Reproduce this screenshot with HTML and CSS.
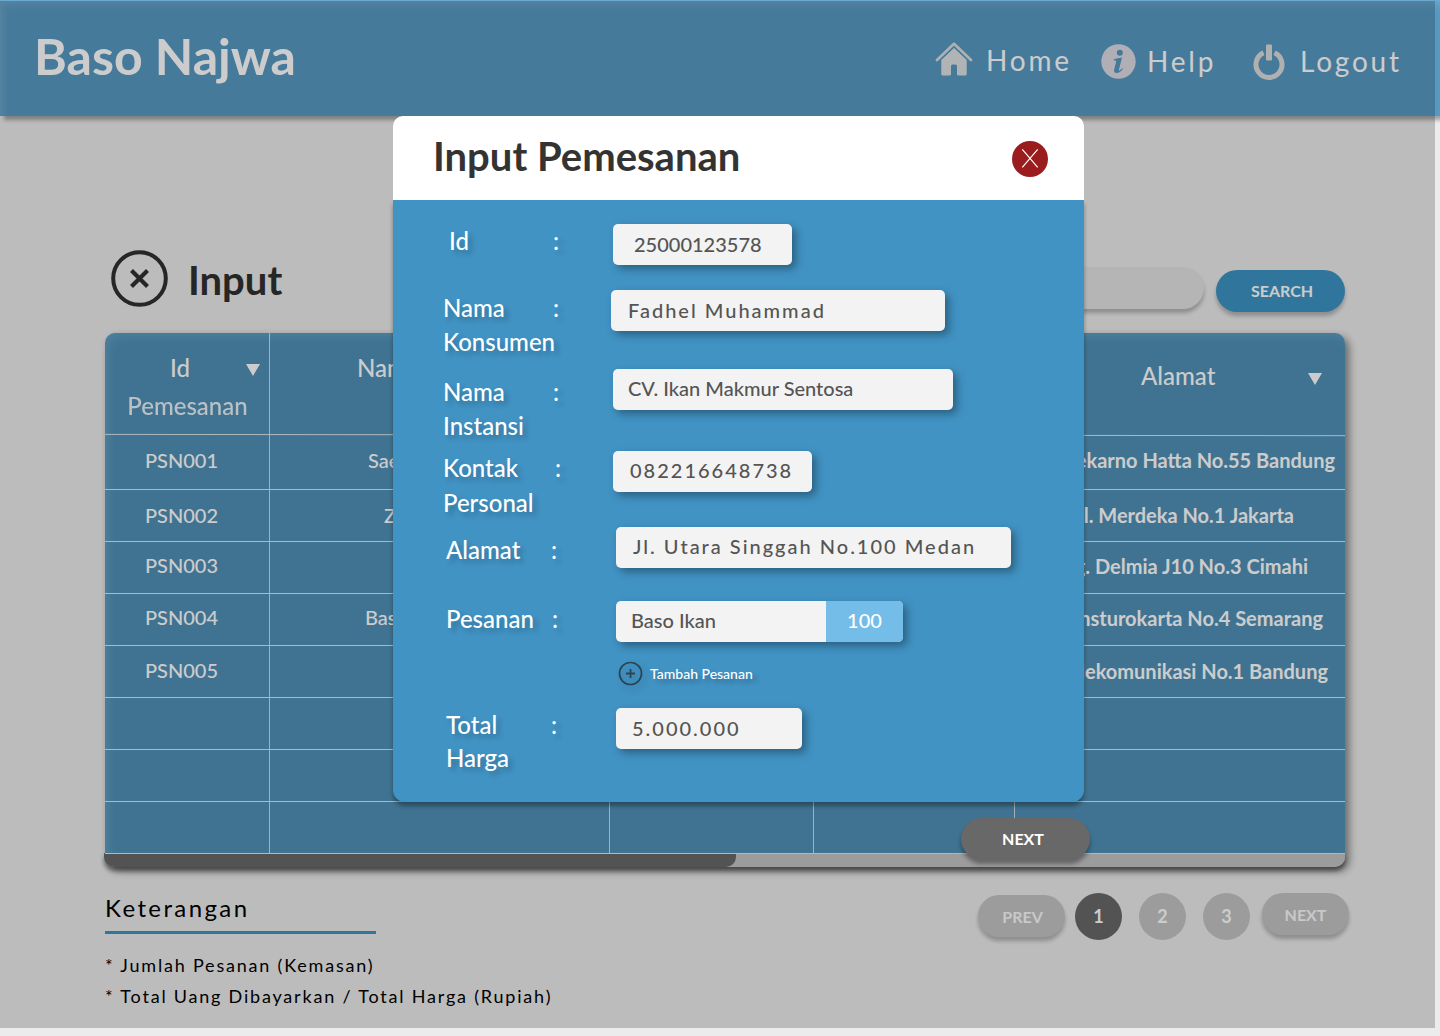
FILE: index.html
```html
<!DOCTYPE html>
<html lang="id">
<head>
<meta charset="utf-8">
<title>Baso Najwa</title>
<link rel="stylesheet" href="styles.css">
</head>
<body>
<div class="page">
  <header class="topbar">
    <h1 class="brand">Baso Najwa</h1>
    <nav class="nav">
      <a class="nav-item home">
        <svg class="icon-home" width="38" height="36" viewBox="0 0 38 36">
          <path d="M6.300 18.800 19 6.800 31.700 18.800V33q0 1.500-1.500 1.500H23.500Q22 34.500 22 33V25q0-1.500-1.500-1.500h-3q-1.500 0-1.500 1.500V33q0 1.500-1.500 1.500H7.800Q6.300 34.500 6.300 33Z" fill="#dde1e3"/>
          <path d="M2 19.500 19 3.500 36 19.500" fill="none" stroke="#5698bf" stroke-width="4.500"/>
          <path d="M2 19 19 2.800 36 19" fill="none" stroke="#d9dcde" stroke-width="2.800" stroke-linejoin="round" stroke-linecap="round"/>
        </svg>
        <span>Home</span>
      </a>
      <a class="nav-item help">
        <svg class="icon-help" width="35" height="35" viewBox="0 0 35 35">
          <circle cx="17.500" cy="17.500" r="17.200" fill="#dcdbe4"/>
          <circle cx="18.800" cy="8.800" r="3" fill="#5698bf"/>
          <path d="M12.800 15.300Q17 14.300 21 13.600L18 25.500Q17.600 27.300 18.700 26.600L21.300 24.200 21.900 25Q18.500 29.500 14.800 29Q12.500 28.500 13.200 25.500L15.200 17.500Q15.400 16.300 12.600 16.300Z" fill="#5698bf"/>
        </svg>
        <span>Help</span>
      </a>
      <a class="nav-item logout">
        <svg class="icon-power" width="32" height="36" viewBox="0 0 32 36">
          <path d="M10.500 8.700A13 13 0 1 0 21.500 8.700" fill="none" stroke="#dddddd" stroke-width="5"/>
          <rect x="11.800" y="-1" width="8.400" height="19" fill="#5698bf"/>
          <rect x="13" y="0.500" width="6" height="16" rx="1" fill="#dddddd"/>
        </svg>
        <span>Logout</span>
      </a>
    </nav>
  </header>

  <main class="content">
    <div class="toolbar">
      <svg class="icon-close" width="57" height="57" viewBox="0 0 57 57">
        <circle cx="28.500" cy="28.500" r="26.300" fill="none" stroke="#303030" stroke-width="4"/>
        <path d="M20.500 20.500l16 16M36.500 20.500l-16 16" stroke="#303030" stroke-width="4.200"/>
      </svg>
      <h2 class="toolbar-title">Input</h2>
      <div class="search-box"></div>
      <button class="pill search-btn">SEARCH</button>
    </div>

    <div class="table-wrap">
      <div class="table">
        <div class="row head">
          <div class="cell id">Id<br><span class="second">Pemesanan</span><i class="sort"></i></div>
          <div class="cell name">Nama</div>
          <div class="cell"></div>
          <div class="cell"></div>
          <div class="cell addr">Alamat<i class="sort"></i></div>
          <svg class="head-line" width="1240" height="4" viewBox="0 0 1240 4"><path d="M0 1.400 1240 2.700" stroke="#dfe6ea"/></svg>
        </div>
        <div class="row r1"><div class="cell id">PSN001</div><div class="cell name">Saeful</div><div class="cell"></div><div class="cell"></div><div class="cell addr">Jl. Soekarno Hatta No.55 Bandung</div></div>
        <div class="row r2"><div class="cell id">PSN002</div><div class="cell name">Zaenal</div><div class="cell"></div><div class="cell"></div><div class="cell addr">Jl. Merdeka No.1 Jakarta</div></div>
        <div class="row r3"><div class="cell id">PSN003</div><div class="cell name"></div><div class="cell"></div><div class="cell"></div><div class="cell addr">Gg. Delmia J10 No.3 Cimahi</div></div>
        <div class="row r4"><div class="cell id">PSN004</div><div class="cell name">Basuki</div><div class="cell"></div><div class="cell"></div><div class="cell addr">Jl. Monsturokarta No.4 Semarang</div></div>
        <div class="row r5"><div class="cell id">PSN005</div><div class="cell name"></div><div class="cell"></div><div class="cell"></div><div class="cell addr">Jl. Telekomunikasi No.1 Bandung</div></div>
        <div class="row"><div class="cell"></div><div class="cell"></div><div class="cell"></div><div class="cell"></div><div class="cell"></div></div>
        <div class="row"><div class="cell"></div><div class="cell"></div><div class="cell"></div><div class="cell"></div><div class="cell"></div></div>
        <div class="row"><div class="cell"></div><div class="cell"></div><div class="cell"></div><div class="cell"></div><div class="cell"></div></div>
      </div>
      <div class="scrollbar"><div class="thumb"></div></div>
    </div>

    <div class="bottom">
      <section class="notes">
        <h3 class="notes-title">Keterangan</h3>
        <p class="note">* Jumlah Pesanan (Kemasan)</p>
        <p class="note">* Total Uang Dibayarkan / Total Harga (Rupiah)</p>
      </section>
      <div class="pager">
        <button class="pill prev">PREV</button>
        <button class="dot active">1</button>
        <button class="dot">2</button>
        <button class="dot">3</button>
        <button class="pill next">NEXT</button>
      </div>
    </div>
  </main>
</div>

<div class="overlay"></div>

<div class="modal">
  <div class="modal-head">
    <h2 class="modal-title">Input Pemesanan</h2>
    <svg class="modal-close" width="36" height="36" viewBox="0 0 36 36">
      <circle cx="18" cy="18" r="18" fill="#9a1c1e"/>
      <path d="M10.300 8.300l15.400 18M25.700 8.300l-15.400 18" stroke="#fff" stroke-width="1.200"/>
    </svg>
  </div>
  <form class="modal-body">
    <div class="field f-id"><label class="label">Id</label><span class="colon">:</span><div class="value">25000123578</div></div>
    <div class="field f-nama"><label class="label">Nama<br>Konsumen</label><span class="colon">:</span><div class="value spaced">Fadhel Muhammad</div></div>
    <div class="field f-instansi"><label class="label">Nama<br>Instansi</label><span class="colon">:</span><div class="value">CV. Ikan Makmur Sentosa</div></div>
    <div class="field f-kontak"><label class="label">Kontak<br>Personal</label><span class="colon">:</span><div class="value spaced">082216648738</div></div>
    <div class="field f-alamat"><label class="label">Alamat</label><span class="colon">:</span><div class="value spaced">Jl. Utara Singgah No.100 Medan</div></div>
    <div class="field f-pesanan"><label class="label">Pesanan</label><span class="colon">:</span><div class="value">Baso Ikan<span class="qty">100</span></div></div>
    <div class="add">
      <svg class="icon-add" width="26" height="26" viewBox="0 0 26 26">
        <circle cx="13.500" cy="12.500" r="11" fill="none" stroke="#2c4353" stroke-width="1.700"/>
        <path d="M9 12.500h9M13.500 8v9" stroke="#2c4353" stroke-width="1.800"/>
      </svg>
      <span>Tambah Pesanan</span>
    </div>
    <div class="field f-total"><label class="label">Total<br>Harga</label><span class="colon">:</span><div class="value spaced">5.000.000</div></div>
  </form>
</div>
<button class="pill modal-next">NEXT</button>
</body>
</html>
```
FILE: styles.css
```css
* { box-sizing: border-box; }
html, body { margin: 0; height: 1036px; overflow: hidden; }
body { position: relative; background: #ececec; font-family: Lato, "Liberation Sans", sans-serif; }
h1, h2, h3, p { margin: 0; }
button { border: 0; padding: 0; font-family: inherit; }

/* Header */
.topbar {
  display: flex; justify-content: space-between; height: 116px; padding: 0 38px 0 34px;
  background: #5899c2; color: #fff; border-top: 1px solid #6aaad0;
  box-shadow: inset 4px 4px 6px rgba(255,255,255,.12), 4px 4px 4px rgba(0,0,0,.32);
}
.brand { font-size: 50px; line-height: 60px; font-weight: 700; margin-top: 25px; }
.nav { display: flex; font-size: 28px; line-height: 34px; letter-spacing: .1em; }
.nav-item { display: flex; }
.home span { width: 86px; margin: 42px 0 0 13px; }
.help span { width: 71px; margin: 43px 0 0 11px; }
.logout span { width: 102px; margin: 43px 0 0 15px; }
.icon-home { margin-top: 40px; }
.icon-help { margin: 43px 0 0 29px; }
.icon-power { margin: 43px 0 0 35px; }

/* Toolbar */
.content { padding: 134px 91px 0 105px; }
.toolbar { display: flex; height: 83px; padding-left: 6px; }
.toolbar-title { margin: 6px 0 0 20px; font-size: 40px; line-height: 48px; color: #303030; }
.search-box {
  width: 330px; height: 42px; margin: 17px 12px 0 auto; border-radius: 21px;
  background: #e3e3e3; box-shadow: 0 4px 4px rgba(0,0,0,.25);
}
.pill {
  width: 87px; height: 42px; border-radius: 21px; background: #c4c4c4; color: #fff;
  font-size: 16px; font-weight: 700; line-height: 42px; text-align: center;
  box-shadow: 0 4px 4px rgba(0,0,0,.25);
}
.search-btn { width: 129px; margin: 20px 4px 0 0; padding-left: 3px; background: #3d94c3; }

/* Table */
.table-wrap { width: 1240px; height: 534px; border-radius: 10px; box-shadow: 4px 4px 8px rgba(0,0,0,.45); }
.table {
  height: 520px; border-radius: 10px 10px 0 0; background: #4f90b6; color: #fff;
  box-shadow: inset 4px 4px 10px rgba(120,180,215,.45);
}
.row {
  position: relative; display: grid; grid-template-columns: 165px 340px 204px 201px 1fr;
  height: 52px; border-bottom: 1px solid #dfe6ea; font-size: 20px; line-height: 24px; font-weight: 500;
}
.cell { position: relative; border-right: 1px solid rgba(235,242,246,.8); white-space: nowrap; }
.cell:last-child, .head .addr { border-right: 0; }
.head { height: 102px; border-bottom: 0; font-size: 24px; line-height: 38px; }
.head-line { position: absolute; left: 0; bottom: -2px; }
.cell.id { padding-right: 11px; text-align: center; }
.head .cell.id { padding: 16px 14px 0 0; }
.head .second { margin-left: 15px; opacity: .88; }
.head .cell.name { padding: 16px 0 0 87px; }
.head .cell.addr { padding: 24px 0 0 126px; text-align: left; font-weight: 500; }
.sort {
  position: absolute; right: 9px; top: 31px; border: 7px solid transparent;
  border-top: 12px solid #fff; border-bottom: 0;
}
.addr .sort { right: 23px; top: 40px; }
.r1 { height: 55px; }
.r1 .cell, .r2 .cell { padding-top: 13px; }
.r3 .cell, .r4 .cell { padding-top: 11px; }
.r5 .cell { padding-top: 12px; }
.r1 .name { padding-left: 98px; }
.r2 .name { padding-left: 114px; }
.r4 .name { padding-left: 95px; }
.addr { display: flex; justify-content: flex-end; }
.row:not(.head) .addr { font-weight: 700; }
.head .addr { display: block; }
.r1 .cell.addr { padding-right: 10px; }
.r2 .cell.addr { padding-right: 51px; }
.r3 .cell.addr { padding: 12px 37px 0 0; }
.r4 .cell.addr { padding: 12px 22px 0 0; }
.r5 .cell.addr { padding: 13px 17px 0 0; }
.scrollbar { height: 14px; margin-left: -1px; background: #c4c4c4; border-radius: 0 0 10px 10px; box-shadow: 0 4px 4px rgba(0,0,0,.4); }
.thumb { width: 632px; height: 14px; background: #686868; border-radius: 0 0 10px 10px; }

/* Notes and pagination */
.bottom { display: flex; justify-content: space-between; }
.notes-title {
  width: 271px; height: 67px; padding-top: 26px; border-bottom: 3px solid #3d94c3;
  font-size: 24px; line-height: 29px; font-weight: 400; letter-spacing: .1em;
}
.note { font-size: 18px; line-height: 31px; letter-spacing: .1em; }
.notes-title + .note { margin-top: 16px; }
.pager { display: flex; padding-top: 26px; }
.pager .pill { color: #fbfbfb; }
.prev { margin: 2px 10px 0 0; padding-left: 2px; line-height: 44px; }
.dot { width: 47px; height: 47px; margin-right: 17px; padding-bottom: 1px; border-radius: 50%; background: #c4c4c4; color: #fff; font-size: 18px; font-weight: 700; }
.dot.active { background: #686868; }
.next { margin-left: -5px; line-height: 43px; }

/* Dimmed backdrop */
.overlay { position: absolute; left: 0; top: 1px; width: 1435px; height: 1027px; background: rgba(0,0,0,.2); }

/* Dialog */
.modal { position: absolute; left: 393px; top: 116px; width: 691px; height: 686px; }
.modal-head { display: flex; justify-content: space-between; height: 84px; padding: 25px 36px 0 40px; background: #fff; border-radius: 10px 10px 0 0; }
.modal-title { margin-top: -9px; font-size: 40px; line-height: 48px; color: #333; }
.modal-body { height: 602px; padding-top: 24px; background: #4193c4; border-radius: 0 0 12px 12px; color: #fff; box-shadow: 0 4px 4px rgba(0,0,0,.35); }
.field { display: flex; font-size: 24px; line-height: 34px; font-weight: 500; }
.label, .colon { text-shadow: 4px 4px 5px rgba(0,0,0,.22); }
.label { width: 110px; margin-left: 50px; white-space: nowrap; }
.colon { width: 60px; }
.value {
  height: 41px; padding-left: 15px; border-radius: 5px; background: #f3f3f3; color: #555;
  font-size: 20px; line-height: 39px; white-space: nowrap; box-shadow: 4px 4px 8px rgba(0,0,0,.35);
}
.spaced { letter-spacing: .1em; }
.f-id { height: 66px; }
.f-id .label { margin-left: 56px; width: 104px; }
.f-id .value { width: 179px; padding-left: 21px; line-height: 41px; }
.f-nama { height: 79px; }
.f-nama .label, .f-nama .colon { margin-top: 1px; }
.f-nama .colon { width: 58px; }
.f-nama .value { width: 334px; padding-left: 17px; line-height: 41px; }
.f-instansi { height: 82px; }
.f-instansi .label, .f-instansi .colon { margin-top: 6px; }
.f-instansi .value { width: 340px; }
.f-kontak { height: 76px; line-height: 35px; }
.f-kontak .label { width: 112px; }
.f-kontak .label, .f-kontak .colon { margin-top: -1px; }
.f-kontak .colon { width: 58px; }
.f-kontak .value { width: 199px; padding-left: 17px; }
.f-alamat { height: 74px; }
.f-alamat .label { margin: 6px 0 0 53px; width: 105px; }
.f-alamat .colon { margin-top: 6px; width: 65px; }
.f-alamat .value { width: 395px; padding-left: 17px; }
.f-pesanan { height: 60px; }
.f-pesanan .label { margin: 1px 0 0 53px; width: 106px; }
.f-pesanan .colon { margin-top: 1px; width: 64px; }
.f-pesanan .value { display: flex; justify-content: space-between; width: 287px; padding-left: 15px; }
.qty { width: 77px; height: 41px; background: #74bde8; color: #fff; text-align: center; border-radius: 0 5px 5px 0; }
.add { display: flex; align-items: center; height: 26px; margin: 0 0 21px 224px; font-size: 14px; font-weight: 500; text-shadow: 4px 4px 4px rgba(0,0,0,.25); }
.add span { margin: -2px 0 0 7px; }
.icon-add { filter: drop-shadow(3px 4px 3px rgba(0,0,0,.18)); }
.f-total { line-height: 33px; }
.f-total .label { margin: 0 0 0 53px; width: 105px; }
.f-total .colon { width: 65px; }
.f-total .value { width: 186px; padding-left: 16px; line-height: 41px; }
.modal-next { position: absolute; left: 961px; top: 818px; width: 129px; padding-right: 5px; background: #686868; box-shadow: 0 4px 4px rgba(0,0,0,.35); }
```
